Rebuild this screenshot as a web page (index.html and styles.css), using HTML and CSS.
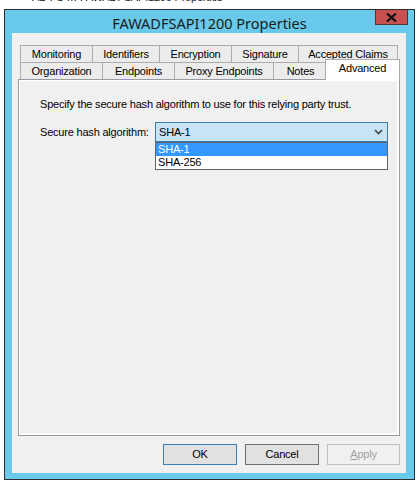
FILE: index.html
```html
<!DOCTYPE html>
<html>
<head>
<meta charset="utf-8">
<link rel="stylesheet" href="styles.css">
</head>
<body>
<div class="behind"><div class="behind-text">AD FS … FAWADFSAPI1200 Properties</div></div>
<div class="window">
  <div class="titlebar">
    <div class="title">FAWADFSAPI1200 Properties</div>
    <div class="close"><svg width="11" height="9" viewBox="0 0 11 9"><path d="M1 0.5 L10 8.5 M10 0.5 L1 8.5" stroke="#111" stroke-width="2.2"/></svg></div>
  </div>
  <div class="client">
    <div class="tabs">
      <div class="row back">
        <div class="tab w73">Monitoring</div>
        <div class="tab w68">Identifiers</div>
        <div class="tab w73">Encryption</div>
        <div class="tab w68">Signature</div>
        <div class="tab w100 last">Accepted Claims</div>
      </div>
      <div class="row front">
        <div class="tab w83">Organization</div>
        <div class="tab w73">Endpoints</div>
        <div class="tab w100">Proxy Endpoints</div>
        <div class="tab w55">Notes</div>
        <div class="tab selected">Advanced</div>
      </div>
    </div>
    <div class="panel">
      <div class="page">
        <p class="desc">Specify the secure hash algorithm to use for this relying party trust.</p>
        <div class="field">
          <span class="label">Secure hash algorithm:</span>
          <div class="combo">
            <span class="combo-value">SHA-1</span>
            <svg class="chev" width="9" height="6" viewBox="0 0 9 6"><path d="M1 1 L4.5 4.5 L8 1" fill="none" stroke="#444" stroke-width="1.6"/></svg>
            <div class="dropdown">
              <div class="opt hl">SHA-1</div>
              <div class="opt">SHA-256</div>
            </div>
          </div>
        </div>
      </div>
    </div>
    <div class="buttons">
      <div class="btn default">OK</div>
      <div class="btn">Cancel</div>
      <div class="btn disabled"><u>A</u>pply</div>
    </div>
  </div>
</div>
</body>
</html>
```
FILE: styles.css
```css
html, body {
  margin: 0;
  padding: 0;
  background: #ffffff;
  font-family: "Liberation Sans", Arial, sans-serif;
  font-size: 11px;
  letter-spacing: -0.2px;
  color: #000;
}
.behind {
  height: 9px;
  overflow: hidden;
}
.behind-text {
  margin-top: -9px;
  padding-left: 32px;
  font-size: 11px;
  line-height: 13px;
  color: #222;
  white-space: nowrap;
}
.window {
  position: relative;
  margin-left: 4px;
  width: 411px;
  height: 471px;
  box-sizing: border-box;
  border: 1px solid #2d2d2d;
  background: #68c9ea;
  padding: 0 8px 6px 7px;
  display: flex;
  flex-direction: column;
}
.titlebar {
  height: 23px;
  display: flex;
  align-items: center;
  justify-content: center;
}
.title {
  font-family: "Noto Sans", sans-serif;
  font-size: 14.5px;
  letter-spacing: 0;
  color: #1b1b1b;
  margin-left: 1px;
  margin-top: 2px;
}
.close {
  position: absolute;
  top: 0;
  right: 6px;
  width: 33px;
  height: 15px;
  box-sizing: border-box;
  background: #c75050;
  border: 1px solid #4b3535;
  border-top: none;
  display: flex;
  align-items: center;
  justify-content: center;
}
.client {
  flex: 1;
  background: #f0f0f0;
  display: flex;
  flex-direction: column;
  padding: 12px 6px 8px 6px;
}
.tabs {
  height: 34px;
  padding-left: 2px;
  position: relative;
  z-index: 2;
}
.row {
  display: flex;
  height: 17px;
}
.tab {
  height: 17px;
  box-sizing: border-box;
  border: 1px solid #acacac;
  border-bottom: none;
  margin-right: -1px;
  background: #ececec;
  text-align: center;
  line-height: 16px;
  white-space: nowrap;
}
.w55 { width: 55px; }
.w68 { width: 68px; }
.w73 { width: 73px; }
.w83 { width: 83px; }
.w100 { width: 100px; }
.tab.selected {
  position: relative;
  width: 75px;
  height: 21px;
  margin-top: -3px;
  margin-left: -2px;
  background: #ffffff;
  line-height: 17px;
  z-index: 3;
}
.panel {
  height: 357px;
  width: 382px;
  box-sizing: border-box;
  border: 1px solid #979aa3;
  background: #ffffff;
  padding: 1px 2px 2px 1px;
  display: flex;
}
.page {
  flex: 1;
  background: #f0f0f0;
  padding: 17px 0 0 20px;
}
.desc {
  margin: 0;
  line-height: 13px;
  white-space: nowrap;
}
.field {
  margin-top: 11px;
  display: flex;
  align-items: center;
}
.label {
  width: 115px;
  line-height: 13px;
}
.combo {
  position: relative;
  width: 233px;
  height: 20px;
  box-sizing: border-box;
  border: 1px solid #3f7cab;
  background: #c6e4f6;
  display: flex;
  align-items: center;
  padding-left: 3px;
}
.combo-value {
  flex: 1;
  line-height: 13px;
}
.chev {
  margin-right: 4px;
}
.dropdown {
  position: absolute;
  top: 19px;
  left: -1px;
  width: 233px;
  box-sizing: border-box;
  border: 1px solid #646464;
  background: #ffffff;
}
.opt {
  height: 13px;
  line-height: 13px;
  padding-left: 2px;
}
.opt.hl {
  background: #3399ff;
  color: #ffffff;
}
.buttons {
  display: flex;
  justify-content: flex-end;
  gap: 8px;
  margin-top: auto;
}
.btn {
  width: 74px;
  height: 21px;
  box-sizing: border-box;
  border: 1px solid #707070;
  background: #e1e1e1;
  text-align: center;
  line-height: 19px;
}
.btn.default {
  border-color: #3c7fb1;
}
.btn.disabled {
  border-color: #bfbfbf;
  background: #f0f0f0;
  color: #a0a0a0;
  width: 73px;
}
```
